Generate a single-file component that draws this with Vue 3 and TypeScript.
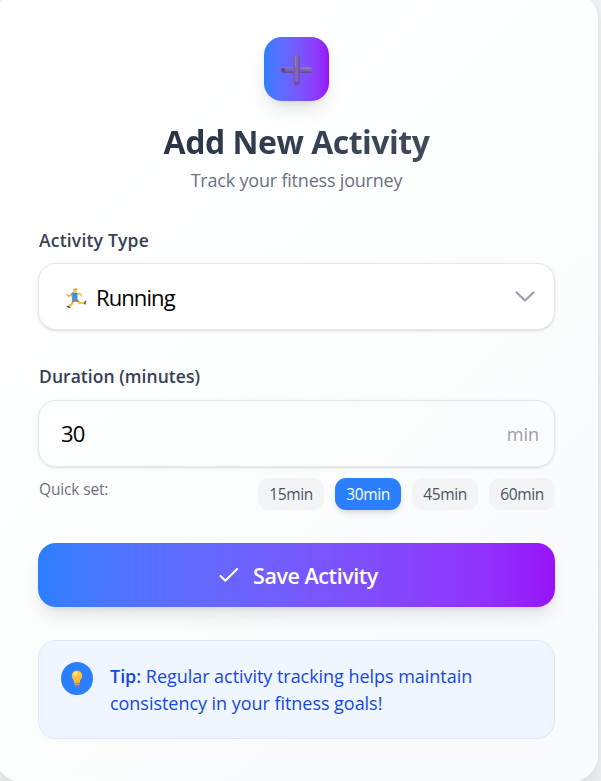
<script setup lang="ts">
import { ref } from 'vue'

const activity = ref('Running')
const duration = ref(30)
const presets: number[] = [15, 30, 45, 60]
</script>

<template>
  <main class="page">
    <section class="card">
      <header class="header">
        <div class="badge">
          <svg width="33" height="34" viewBox="0 0 34 34">
            <defs>
              <linearGradient id="barH" x1="0" y1="0" x2="0" y2="1">
                <stop offset="0" stop-color="#8c78b8" />
                <stop offset="0.5" stop-color="#7d62b4" />
                <stop offset="1" stop-color="#67479f" />
              </linearGradient>
              <linearGradient id="barV" x1="0" y1="0" x2="1" y2="0">
                <stop offset="0" stop-color="#7359a8" />
                <stop offset="0.5" stop-color="#826dba" />
                <stop offset="1" stop-color="#6d49a9" />
              </linearGradient>
            </defs>
            <rect x="1" y="14" width="32.5" height="6" rx="3" fill="url(#barH)" />
            <rect x="14" y="1" width="6.4" height="32.5" rx="3.2" fill="url(#barV)" />
            <circle cx="3.2" cy="17" r="2" fill="#5d3f85" />
            <circle cx="17.2" cy="31" r="2.2" fill="#843fc0" />
            <path d="M16 3.5V14M23 15.5H31" stroke="#9083b8" stroke-width="1" stroke-linecap="round" />
          </svg>
        </div>
        <h1 class="title">Add New Activity</h1>
        <p class="subtitle">Track your fitness journey</p>
      </header>

      <div class="label">Activity Type</div>
      <div class="field select">
        <svg class="runner" width="21" height="21" viewBox="0 0 22 23" preserveAspectRatio="none" fill="none" stroke-linecap="round" stroke-linejoin="round">
          <path d="M6.8 6 3 9.2 1.3 7.6" stroke="#f5b52e" stroke-width="1.7" />
          <path d="M11 6.2 14.5 6 16.4 8.6" stroke="#f9bd35" stroke-width="1.7" />
          <path d="M7.2 14.5 6.4 17.2 3 20.3" stroke="#f5b52e" stroke-width="2" />
          <path d="M12.3 14 14 16.5 19.5 16.2" stroke="#f9bd35" stroke-width="2" />
          <path d="M6.6 5.3 11.6 5.6 11.4 11.5 6.8 11Z" fill="#2896ea" stroke="#2896ea" stroke-width="1" />
          <path d="M6.8 11 11.6 11.4 13.8 14.4 11.3 15.7 9.6 14.7 7.7 15.8 5.8 14.6Z" fill="#898294" />
          <circle cx="9.8" cy="3" r="2.2" fill="#ffc83d" />
          <path d="M7.4 2.9C7.4.7 9.3.1 11.8.8L11.2 2 8.7 2.2Z" fill="#e58b22" />
          <path d="M1.4 20.2 3.9 21.3M20.4 14.6 19.7 17.2" stroke="#574583" stroke-width="1.6" />
        </svg>
        <span class="value running">{{ activity }}</span>
        <svg class="chevron" width="20" height="12" viewBox="0 0 20 12" fill="none">
          <path d="m1.6 1.5 8.4 8 8.4-8" stroke="#99a1af" stroke-width="2.2" stroke-linecap="round" stroke-linejoin="round" />
        </svg>
      </div>

      <div class="label second">Duration (minutes)</div>
      <div class="field number">
        <span class="value minutes">{{ duration }}</span>
        <span class="unit">min</span>
      </div>

      <div class="quick">
        <span class="hint">Quick set:</span>
        <div class="chips">
          <button v-for="p in presets" :key="p" class="chip" :class="{ active: p === duration }" @click="duration = p">
            {{ p }}min
          </button>
        </div>
      </div>

      <button class="save">
        <svg width="20" height="16" viewBox="0 0 20 16" fill="none">
          <path d="m1.5 9 4.8 4.7L18.2 2" stroke="#fff" stroke-width="2.1" stroke-linecap="round" stroke-linejoin="round" />
        </svg>
        <span>Save Activity</span>
      </button>

      <aside class="tip">
        <div class="bulb">
          <svg width="12" height="17" viewBox="0 0 12 17">
            <path d="M3.4 11.5h5.2v3.7L7.3 16.5H4.7l-1.3-1.3Z" fill="#9a7f91" />
            <path d="M6 .5a5.2 5.2 0 0 0-5.2 5.3C.8 8.6 3 9.4 3.3 12.7h5.4C9 9.4 11.2 8.6 11.2 5.8A5.2 5.2 0 0 0 6 .5Z" fill="#ffc53a" />
            <path d="M4.3 7 5.3 12.5M7.7 7l-1 5.5" stroke="#f19b3a" stroke-width=".8" />
            <ellipse cx="4.4" cy="3.8" rx="2" ry="2.2" fill="#ffe07a" />
            <path d="M3.6 14.2h4.8" stroke="#d3b3a5" stroke-width=".8" />
          </svg>
        </div>
        <p class="tiptext">
          <span class="line"><strong>Tip:</strong> Regular activity tracking helps maintain</span>
          <span class="line">consistency in your fitness goals!</span>
        </p>
      </aside>
    </section>
  </main>
</template>

<style>
body {
  margin: 0;
  overflow: hidden;
}
</style>

<style scoped>
.page {
  height: 781px;
  overflow: hidden;
  display: flex;
  align-items: flex-start;
  background: #f1f2f4;
  font-family: "Open Sans", "Noto Sans", sans-serif;
}
.card {
  box-sizing: border-box;
  flex: none;
  width: 603px;
  height: 790px;
  margin: -8px 0 0 -5px;
  padding: 45px 43px 0;
  border-radius: 27px;
  background: linear-gradient(135deg, #ffffff 0%, #fcfdfd 50%, #f9fafc 100%);
  box-shadow: 0 10px 20px rgba(0, 0, 0, 0.09), 0 0 2px rgba(0, 0, 0, 0.06);
}
.header {
  display: flex;
  flex-direction: column;
  align-items: center;
  height: 189px;
}
.badge {
  display: flex;
  align-items: center;
  justify-content: center;
  width: 65px;
  height: 64px;
  border-radius: 18px;
  background: linear-gradient(90deg in oklab, #2b7fff, #9810fa);
  box-shadow: 0 11px 17px -3px rgba(0, 0, 0, 0.1), 0 4px 7px -4px rgba(0, 0, 0, 0.1);
}
.badge svg {
  margin-top: 2px;
}
.title {
  margin: 18px 0 0;
  font-size: 32px;
  line-height: 46px;
  font-weight: 700;
  letter-spacing: -0.5px;
  white-space: nowrap;
  background: linear-gradient(90deg, #1e2939, #4a5565);
  background-clip: text;
  -webkit-background-clip: text;
  color: transparent;
  padding: 0 125px;
}
.subtitle {
  margin: 2px 0 0;
  font-size: 18px;
  line-height: 27px;
  letter-spacing: -0.2px;
  color: #6a7282;
  white-space: nowrap;
}
.label {
  height: 37px;
  padding-left: 1px;
  font-size: 17.5px;
  line-height: 28px;
  font-weight: 600;
  letter-spacing: 0.2px;
  color: #364153;
}
.label.second {
  margin-top: 32px;
  height: 38px;
  letter-spacing: 0.05px;
}
.field {
  box-sizing: border-box;
  display: flex;
  align-items: center;
  height: 67px;
  border: 1px solid #e5e7eb;
  border-radius: 18px;
  box-shadow: 0 1px 3px rgba(0, 0, 0, 0.1), 0 1px 2px -1px rgba(0, 0, 0, 0.1);
}
.select {
  background: #fff;
  padding: 0 19px 0 27px;
}
.number {
  padding: 0 15px 0 22px;
}
.value {
  font-size: 22px;
  line-height: 30px;
  letter-spacing: -0.9px;
  color: #000;
}
.runner {
  margin-top: 3px;
}
.running {
  margin-left: 9px;
  padding-top: 1px;
}
.minutes {
  margin-top: -1px;
}
.chevron {
  margin: 1px 0 0 auto;
}
.unit {
  margin-left: auto;
  font-size: 18px;
  color: #99a1af;
}
.quick {
  display: flex;
  justify-content: space-between;
  height: 65px;
  padding-top: 11px;
  box-sizing: border-box;
  margin-bottom: 11px;
}
.hint {
  padding-left: 1px;
  font-size: 15.5px;
  line-height: 23px;
  letter-spacing: -0.15px;
  color: #6a7282;
}
.chips {
  display: flex;
  gap: 11px;
}
.chip {
  width: 66px;
  height: 32px;
  padding: 0;
  border: 0;
  border-radius: 11px;
  background: #f3f4f6;
  color: #4a5565;
  font: 15.5px/32px "Open Sans", "Noto Sans", sans-serif;
  letter-spacing: -0.35px;
}
.chip.active {
  background: #2b7fff;
  color: #fff;
  box-shadow: 0 4px 7px -1px rgba(0, 0, 0, 0.12), 0 2px 4px -2px rgba(0, 0, 0, 0.1);
}
.save {
  display: flex;
  align-items: center;
  justify-content: center;
  gap: 14px;
  width: 517px;
  height: 64px;
  padding: 2px 0 0 4px;
  border: 0;
  border-radius: 18px;
  background: linear-gradient(90deg in oklab, #2b7fff, #9810fa);
  box-shadow: 0 11px 17px -3px rgba(0, 0, 0, 0.1), 0 4px 7px -4px rgba(0, 0, 0, 0.1);
  color: #fff;
  font: 600 21.5px/32px "Open Sans", "Noto Sans", sans-serif;
  letter-spacing: -0.45px;
}
.save svg {
  margin-top: -2px;
}
.tip {
  box-sizing: border-box;
  display: flex;
  height: 99px;
  margin-top: 33px;
  padding: 21px 22px;
  border: 1px solid #dbeafe;
  border-radius: 18px;
  background: #eff6ff;
}
.bulb {
  display: flex;
  flex: none;
  align-items: center;
  justify-content: center;
  width: 32px;
  height: 33px;
  border-radius: 50%;
  background: #2b7fff;
}
.tiptext {
  margin: 1px 0 0 17px;
  font-size: 18px;
  line-height: 27px;
  letter-spacing: -0.04px;
  color: #1447e6;
  white-space: nowrap;
}
.line {
  display: block;
}
.tiptext strong {
  font-weight: 600;
}
</style>
